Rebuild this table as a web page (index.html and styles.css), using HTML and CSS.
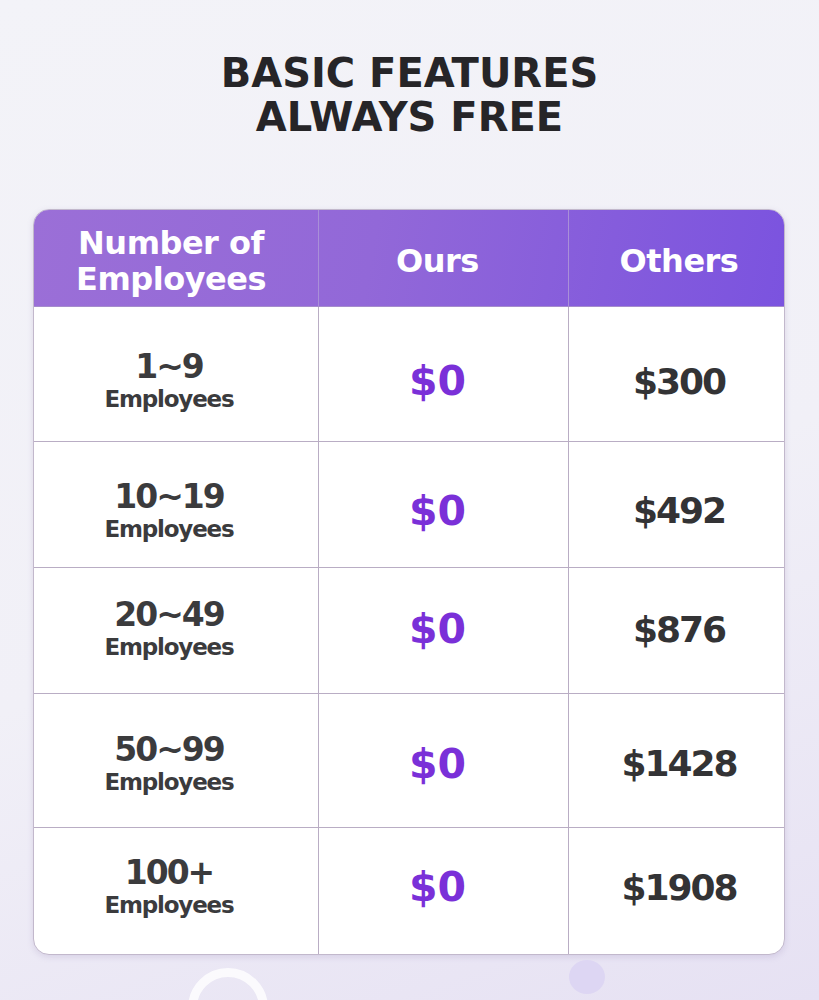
FILE: index.html
```
<!DOCTYPE html>
<html>
<head>
<meta charset="utf-8">
<link rel="stylesheet" href="styles.css">
</head>
<body>
<div class="page">
  <h1 class="title">BASIC FEATURES<br>ALWAYS FREE</h1>
  <div class="card">
    <div class="row head">
      <div class="cell c1">Number of<br>Employees</div>
      <div class="cell c2">Ours</div>
      <div class="cell c3">Others</div>
    </div>
    <div class="row row1">
      <div class="cell c1"><span class="num">1~9</span><span class="emp">Employees</span></div>
      <div class="cell c2"><span class="ours">$0</span></div>
      <div class="cell c3"><span class="other">$300</span></div>
    </div>
    <div class="row row2">
      <div class="cell c1"><span class="num">10~19</span><span class="emp">Employees</span></div>
      <div class="cell c2"><span class="ours">$0</span></div>
      <div class="cell c3"><span class="other">$492</span></div>
    </div>
    <div class="row row3">
      <div class="cell c1"><span class="num">20~49</span><span class="emp">Employees</span></div>
      <div class="cell c2"><span class="ours">$0</span></div>
      <div class="cell c3"><span class="other">$876</span></div>
    </div>
    <div class="row row4">
      <div class="cell c1"><span class="num">50~99</span><span class="emp">Employees</span></div>
      <div class="cell c2"><span class="ours">$0</span></div>
      <div class="cell c3"><span class="other">$1428</span></div>
    </div>
    <div class="row row5">
      <div class="cell c1"><span class="num">100+</span><span class="emp">Employees</span></div>
      <div class="cell c2"><span class="ours">$0</span></div>
      <div class="cell c3"><span class="other">$1908</span></div>
    </div>
  </div>
  <div class="deco ring"></div>
  <div class="deco dot"></div>
</div>
</body>
</html>
```
FILE: styles.css
```
html, body {
  margin: 0;
  padding: 0;
}
body {
  width: 819px;
  height: 1000px;
  overflow: hidden;
  font-family: "DejaVu Sans", "Open Sans", sans-serif;
}
.page {
  position: relative;
  width: 819px;
  height: 1000px;
  background: linear-gradient(160deg, #f3f3f8 0%, #f1f0f7 55%, #e6e1f3 100%);
  padding-top: 51px;
  box-sizing: border-box;
  overflow: hidden;
}
.title {
  margin: 0;
  text-align: center;
  font-weight: 700;
  font-size: 40px;
  line-height: 44px;
  color: #262528;
}
.card {
  margin: 70px 0 0 33px;
  width: 752px;
  border-radius: 16px;
  overflow: hidden;
  background: #fff;
  box-shadow: 0 2px 6px rgba(120, 100, 160, 0.18);
  border: 1px solid #c2b8cc;
  box-sizing: border-box;
}
.row {
  display: grid;
  grid-template-columns: 284px 250px 1fr;
  border-bottom: 1px solid #b9adc4;
  box-sizing: border-box;
}
.cell {
  display: flex;
  flex-direction: column;
  align-items: center;
  justify-content: center;
  text-align: center;
  box-sizing: border-box;
}
.cell + .cell { border-left: 1px solid #b9adc4; }
.c1 { padding-right: 14px; }
.c2 { padding-right: 12px; }
.c3 { padding-left: 5px; }

.head {
  height: 97px;
  background: linear-gradient(100deg, #9b6fd7 0%, #9268d8 45%, #7b53df 100%);
  color: #fff;
  font-weight: 700;
  font-size: 32px;
  line-height: 36px;
  letter-spacing: -0.5px;
  border-bottom: 1px solid #a58ccc;
}
.head .cell { padding-top: 6px; }
.head .cell + .cell { border-left: 1px solid #a98fd8; }
.head .c1 { padding-right: 10px; }

.row1 { height: 135px; }
.row1 .cell { padding-top: 14px; }
.row2 { height: 126px; }
.row2 .cell { padding-top: 12px; }
.row3 { height: 126px; }
.row3 .cell { padding-bottom: 3px; }
.row4 { height: 134px; }
.row4 .cell { padding-top: 6px; }
.row5 { height: 126px; border-bottom: none; }
.row5 .cell { padding-bottom: 8px; }

.num {
  font-size: 33px;
  line-height: 36px;
  font-weight: 700;
  color: #3b3b3d;
  letter-spacing: -2px;
}
.emp {
  font-size: 23px;
  line-height: 28px;
  font-weight: 700;
  color: #3b3b3d;
  letter-spacing: -1.2px;
}
.ours {
  font-size: 41px;
  font-weight: 700;
  color: #7a30d8;
}
.other {
  font-size: 36px;
  font-weight: 700;
  color: #333335;
  letter-spacing: -2px;
}
.deco {
  position: absolute;
  border-radius: 50%;
}
.ring {
  left: 188px;
  top: 968px;
  width: 62px;
  height: 62px;
  border: 9px solid rgba(255, 255, 255, 0.8);
}
.dot {
  left: 569px;
  top: 960px;
  width: 36px;
  height: 34px;
  background: #ddd6f3;
}
```
